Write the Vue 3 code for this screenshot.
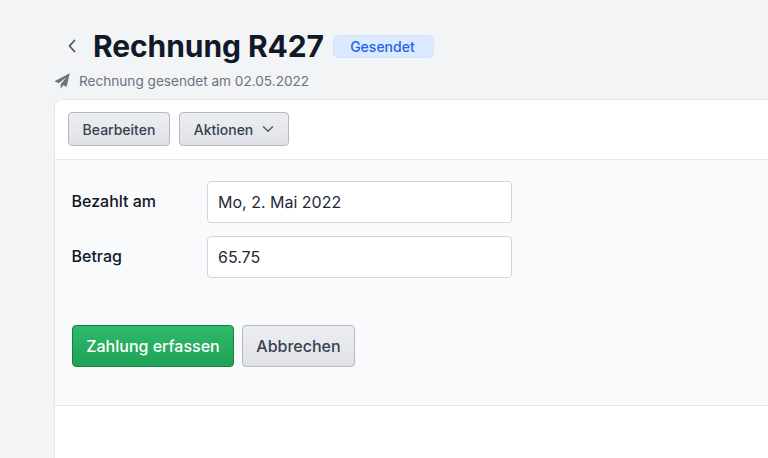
<script setup>
const fields = [
  { label: 'Bezahlt am', value: 'Mo, 2. Mai 2022' },
  { label: 'Betrag', value: '65.75' },
]
</script>

<template>
  <div class="page">
    <header class="head">
      <div class="title-row">
        <svg class="back" viewBox="0 0 12 16" width="12" height="16" fill="none" stroke="#4b5563" stroke-width="1.8" stroke-linecap="round" stroke-linejoin="round"><path d="M8.5 2.5 3.5 8l5 5.5" /></svg>
        <h1 class="title">Rechnung R427</h1>
        <span class="badge">Gesendet</span>
      </div>
      <div class="sub">
        <svg class="plane" viewBox="0 0 16 16" width="16" height="16" fill="#6b7280"><path d="M15.8.2.4 8.3l4.4 1.9L12.6 4 6.6 11.2v4.5l2.7-3.4 3.3 1.4z" /></svg>
        <span>Rechnung gesendet am 02.05.2022</span>
      </div>
    </header>
    <section class="card">
      <div class="toolbar">
        <button class="btn small">Bearbeiten</button>
        <button class="btn small actions">Aktionen
          <svg viewBox="0 0 12 8" width="12" height="8" fill="none" stroke="#4b5563" stroke-width="1.3" stroke-linecap="round" stroke-linejoin="round"><path d="M1.5 1.8 6 6.2l4.5-4.4" /></svg>
        </button>
      </div>
      <div class="form">
        <div class="fields">
          <div v-for="f in fields" :key="f.label" class="row">
            <label class="label">{{ f.label }}</label>
            <div class="input">{{ f.value }}</div>
          </div>
        </div>
        <div class="form-actions">
          <button class="btn big primary">Zahlung erfassen</button>
          <button class="btn big">Abbrechen</button>
        </div>
      </div>
    </section>
  </div>
</template>

<style>
html, body { margin: 0; background: #f3f4f6; }
</style>

<style scoped>
.page {
  width: 768px;
  height: 458px;
  overflow: hidden;
  box-sizing: border-box;
  padding: 28px 0 0 54px;
  background: #f3f4f6;
  font-family: Inter, "Noto Sans", sans-serif;
}
.head { height: 71px; }
.title-row { display: flex; align-items: center; height: 36px; padding-left: 12px; }
.back { flex: none; }
.title {
  margin: 0 9px 0 15px;
  font-size: 30px;
  line-height: 36px;
  font-weight: 700;
  color: #111827;
  letter-spacing: -0.08px;
}
.badge {
  display: flex;
  align-items: center;
  justify-content: center;
  box-sizing: border-box;
  width: 101px;
  height: 23px;
  padding-right: 2px;
  border: 1px solid #d3e3fb;
  border-radius: 6px;
  background: #dbeafe;
  color: #2563eb;
  font-size: 14px;
  font-weight: 500;
}
.sub {
  display: flex;
  align-items: center;
  gap: 9px;
  margin-top: 7px;
  color: #6b7280;
  font-size: 13.6px;
  line-height: 20px;
}
.plane { flex: none; }
.card {
  height: 360px;
  box-sizing: border-box;
  border: 1px solid #e5e7eb;
  border-right: 0;
  border-bottom: 0;
  border-top-left-radius: 8px;
  background: #fff;
}
.toolbar {
  display: flex;
  gap: 9px;
  height: 60px;
  box-sizing: border-box;
  padding: 12px 0 0 13px;
  border-bottom: 1px solid #e5e7eb;
}
.btn {
  box-sizing: border-box;
  border: 1px solid #b4b8c0;
  border-radius: 4px;
  background: linear-gradient(#eceef1, #e0e2e7);
  color: #374151;
  font-family: inherit;
  font-weight: 500;
  padding: 0;
}
.small { height: 34px; width: 102px; font-size: 14px; }
.actions {
  width: 110px;
  display: flex;
  align-items: center;
  justify-content: center;
  gap: 9px;
}
.form {
  height: 246px;
  box-sizing: border-box;
  padding: 21px 0 0 17px;
  background: #f9fafb;
  border-bottom: 1px solid #e5e7eb;
}
.fields { display: flex; flex-direction: column; gap: 13px; }
.row { display: flex; align-items: center; }
.label {
  width: 135.5px;
  margin-left: -0.5px;
  margin-top: -2px;
  font-size: 16px;
  font-weight: 500;
  color: #111827;
}
.input {
  box-sizing: border-box;
  width: 305px;
  height: 42px;
  display: flex;
  align-items: center;
  padding-left: 10px;
  border: 1px solid #d1d5db;
  border-radius: 4px;
  background: #fff;
  color: #1f2937;
  font-size: 16px;
}
.form-actions { display: flex; gap: 8px; margin-top: 47px; }
.big { height: 42px; width: 113px; font-size: 16px; }
.primary {
  width: 162px;
  border-color: #15803d;
  background: linear-gradient(#2dba6a, #1fa257);
  color: #fff;
}
</style>
